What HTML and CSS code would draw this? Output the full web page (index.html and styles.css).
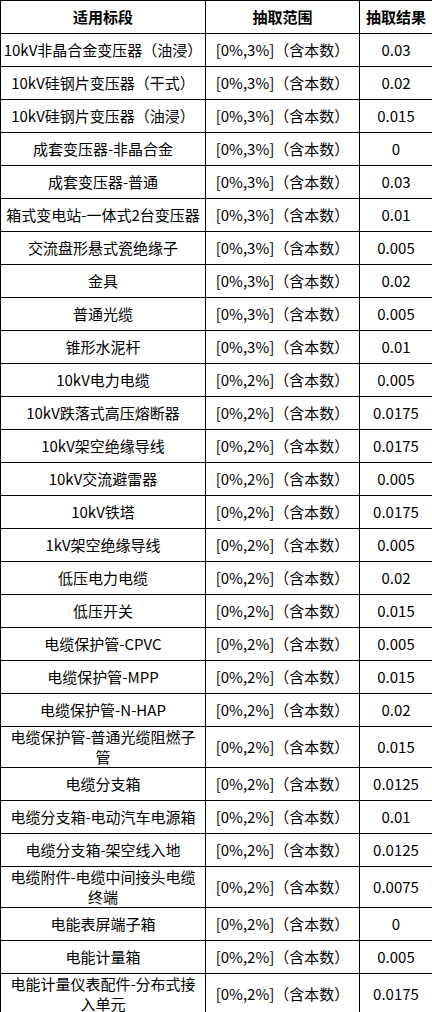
FILE: index.html
```html
<!DOCTYPE html>
<html lang="zh">
<head>
<meta charset="utf-8">
<link rel="stylesheet" href="styles.css">
</head>
<body>
<table class="grid">
<colgroup><col class="c1"><col class="c2"><col class="c3"></colgroup>
<thead>
<tr><th>适用标段</th><th>抽取范围</th><th>抽取结果</th></tr>
</thead>
<tbody>
<tr><td>10kV非晶合金变压器（油浸）</td><td>[0%,3%]（含本数）</td><td>0.03</td></tr>
<tr><td>10kV硅钢片变压器（干式）</td><td>[0%,3%]（含本数）</td><td>0.02</td></tr>
<tr><td>10kV硅钢片变压器（油浸）</td><td>[0%,3%]（含本数）</td><td>0.015</td></tr>
<tr><td>成套变压器-非晶合金</td><td>[0%,3%]（含本数）</td><td>0</td></tr>
<tr><td>成套变压器-普通</td><td>[0%,3%]（含本数）</td><td>0.03</td></tr>
<tr><td>箱式变电站-一体式2台变压器</td><td>[0%,3%]（含本数）</td><td>0.01</td></tr>
<tr><td>交流盘形悬式瓷绝缘子</td><td>[0%,3%]（含本数）</td><td>0.005</td></tr>
<tr><td>金具</td><td>[0%,3%]（含本数）</td><td>0.02</td></tr>
<tr><td>普通光缆</td><td>[0%,3%]（含本数）</td><td>0.005</td></tr>
<tr><td>锥形水泥杆</td><td>[0%,3%]（含本数）</td><td>0.01</td></tr>
<tr><td>10kV电力电缆</td><td>[0%,2%]（含本数）</td><td>0.005</td></tr>
<tr><td>10kV跌落式高压熔断器</td><td>[0%,2%]（含本数）</td><td>0.0175</td></tr>
<tr><td>10kV架空绝缘导线</td><td>[0%,2%]（含本数）</td><td>0.0175</td></tr>
<tr><td>10kV交流避雷器</td><td>[0%,2%]（含本数）</td><td>0.005</td></tr>
<tr><td>10kV铁塔</td><td>[0%,2%]（含本数）</td><td>0.0175</td></tr>
<tr><td>1kV架空绝缘导线</td><td>[0%,2%]（含本数）</td><td>0.005</td></tr>
<tr><td>低压电力电缆</td><td>[0%,2%]（含本数）</td><td>0.02</td></tr>
<tr><td>低压开关</td><td>[0%,2%]（含本数）</td><td>0.015</td></tr>
<tr><td>电缆保护管-CPVC</td><td>[0%,2%]（含本数）</td><td>0.005</td></tr>
<tr><td>电缆保护管-MPP</td><td>[0%,2%]（含本数）</td><td>0.015</td></tr>
<tr><td>电缆保护管-N-HAP</td><td>[0%,2%]（含本数）</td><td>0.02</td></tr>
<tr><td>电缆保护管-普通光缆阻燃子<br>管</td><td>[0%,2%]（含本数）</td><td>0.015</td></tr>
<tr><td>电缆分支箱</td><td>[0%,2%]（含本数）</td><td>0.0125</td></tr>
<tr><td>电缆分支箱-电动汽车电源箱</td><td>[0%,2%]（含本数）</td><td>0.01</td></tr>
<tr><td>电缆分支箱-架空线入地</td><td>[0%,2%]（含本数）</td><td>0.0125</td></tr>
<tr><td>电缆附件-电缆中间接头电缆<br>终端</td><td>[0%,2%]（含本数）</td><td>0.0075</td></tr>
<tr><td>电能表屏端子箱</td><td>[0%,2%]（含本数）</td><td>0</td></tr>
<tr><td>电能计量箱</td><td>[0%,2%]（含本数）</td><td>0.005</td></tr>
<tr><td>电能计量仪表配件-分布式接<br>入单元</td><td>[0%,2%]（含本数）</td><td>0.0175</td></tr>
</tbody>
</table>
</body>
</html>
```

FILE: styles.css
```css
html, body {
  margin: 0;
  padding: 0;
  background: #ffffff;
}

.grid {
  border-collapse: collapse;
  table-layout: fixed;
  width: 432px;
  font-family: "Noto Sans CJK SC", "Liberation Sans", sans-serif;
  font-size: 15px;
  color: #000000;
}

.c1 { width: 205px; }
.c2 { width: 154px; }
.c3 { width: 73px; }

.grid th,
.grid td {
  border: 1px solid #000000;
  padding: 0 2px;
  line-height: 20px;
  text-align: center;
  vertical-align: middle;
  white-space: nowrap;
  overflow: hidden;
}

.grid th {
  font-weight: bold;
}

.grid tr {
  height: 33px;
}
```
